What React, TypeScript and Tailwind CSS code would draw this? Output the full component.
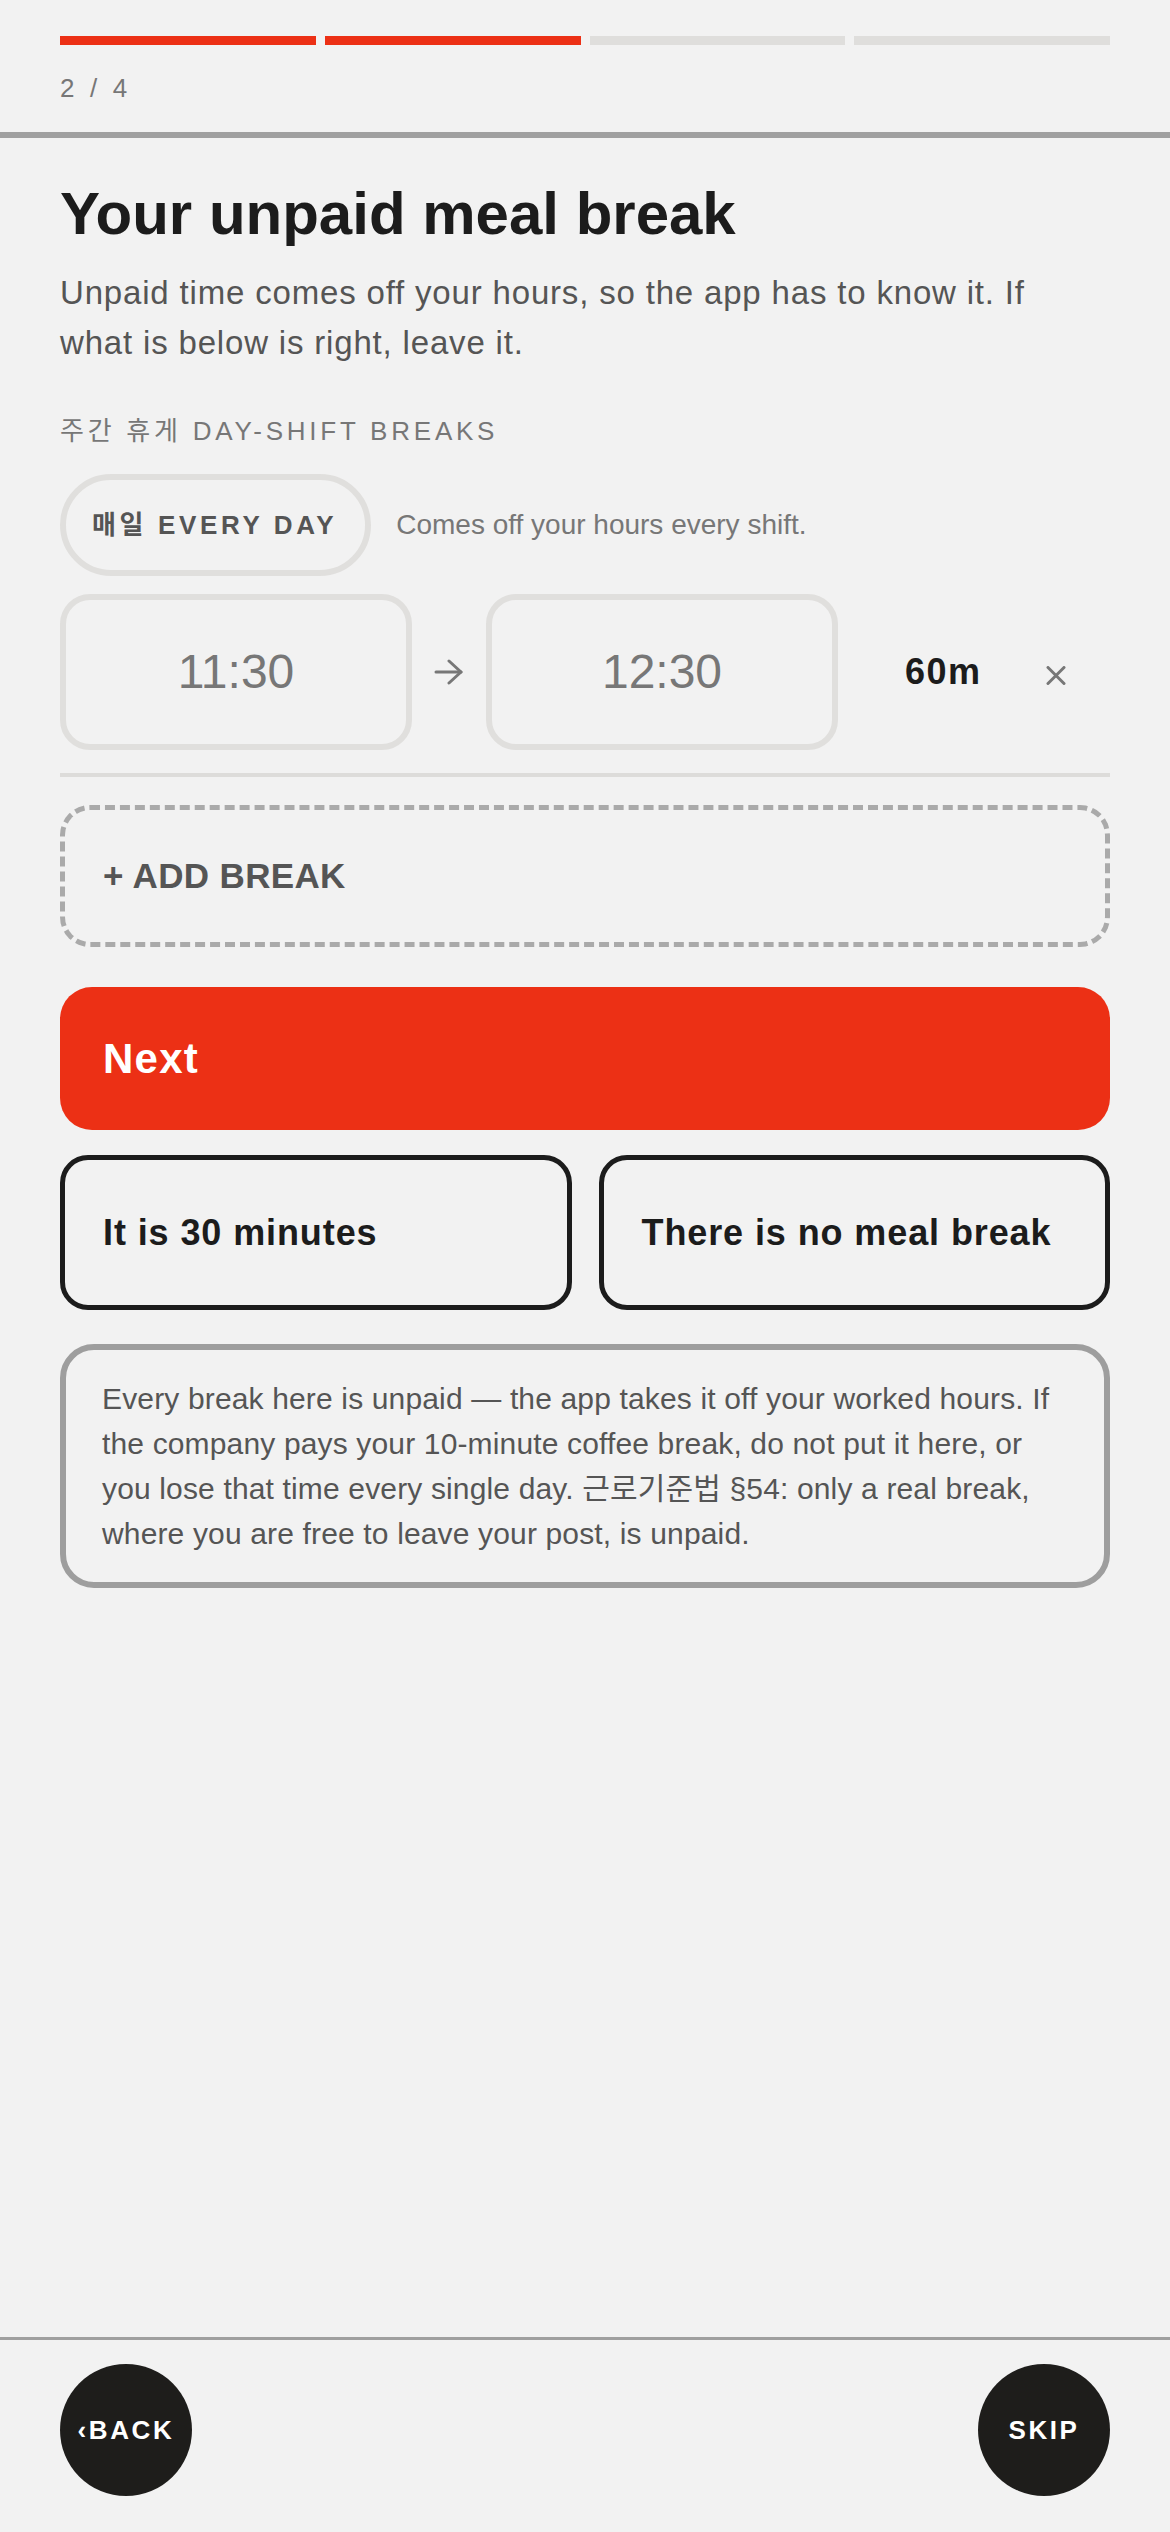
const F = "font-['Liberation_Sans','Noto_Sans_CJK_KR',sans-serif]";

function Arrow() {
  return (
    <svg width="30" height="26" viewBox="0 0 30 26" fill="none" stroke="#777" strokeWidth="3" strokeLinecap="round" strokeLinejoin="round">
      <path d="M2 13 H27" />
      <path d="M15 2 L27 13 L15 24" />
    </svg>
  );
}

function Close() {
  return (
    <svg width="20" height="19" viewBox="0 0 20 19" fill="none" stroke="#777" strokeWidth="3" strokeLinecap="round">
      <path d="M2 1.5 L18 17.5" />
      <path d="M18 1.5 L2 17.5" />
    </svg>
  );
}

export default function App() {
  return (
    <div className={`${F} flex min-h-[2532px] flex-col bg-[#f2f2f2]`}>
      <header className="border-b-[6px] border-[#a0a0a0] px-[60px] pt-[36px] pb-[31px]">
        <div className="flex gap-[9px]">
          <div className="h-[9px] flex-1 bg-[#ec3015]" />
          <div className="h-[9px] flex-1 bg-[#ec3015]" />
          <div className="h-[9px] flex-1 bg-[#dfdedc]" />
          <div className="h-[9px] flex-1 bg-[#dfdedc]" />
        </div>
        <div className="mt-[30px] text-[26px] leading-none tracking-[0.16em] text-[#777]">2 / 4</div>
      </header>

      <main className="flex-1 px-[60px] pt-[46px]">
        <h1 className="text-[60px] font-bold leading-none tracking-[0em] text-[#1c1c1c]">
          Your unpaid meal break
        </h1>
        <p className="mt-[24px] text-[33px] leading-[50px] tracking-[0.025em] text-[#555]">
          Unpaid time comes off your hours, so the app has to know it. If
          <br />
          what is below is right, leave it.
        </p>
        <div className="mt-[50px] text-[26px] leading-none tracking-[0.145em] text-[#777]">
          주간 휴게 DAY-SHIFT BREAKS
        </div>

        <div className="mt-[30px] flex items-center gap-[25px]">
          <div className="flex h-[102px] items-center rounded-full border-[6px] border-[#e0dfdd] pl-[26px] pr-[28px] text-[26px] font-bold tracking-[0.14em] text-[#555]">
            매일 EVERY DAY
          </div>
          <span className="text-[28px] text-[#777]">Comes off your hours every shift.</span>
        </div>

        <div className="mt-[18px] flex items-center">
          <div className="flex h-[156px] w-[352px] items-center justify-center rounded-[30px] border-[6px] border-[#e0dfdd] text-[48px] text-[#777]">
            11:30
          </div>
          <div className="flex w-[74px] justify-center">
            <Arrow />
          </div>
          <div className="flex h-[156px] w-[352px] items-center justify-center rounded-[30px] border-[6px] border-[#e0dfdd] text-[48px] text-[#777]">
            12:30
          </div>
          <span className="ml-[67px] text-[36px] font-bold tracking-[0.04em] text-[#1c1c1c]">60m</span>
          <span className="ml-[65px] mt-[6px] flex">
            <Close />
          </span>
        </div>

        <div className="mt-[23px] h-[4px] bg-[#dddcda]" />

        <div className="mt-[28px] flex h-[142px] items-center rounded-[30px] border-[5px] border-dashed border-[#aaaaaa] px-[38px] text-[35px] font-bold tracking-[0.01em] text-[#555]">
          + ADD BREAK
        </div>

        <button className="mt-[40px] flex h-[143px] w-full items-center rounded-[32px] bg-[#ec3015] px-[43px] text-[42px] font-bold tracking-[0.03em] text-white">
          Next
        </button>

        <div className="mt-[25px] grid grid-cols-2 gap-[27px]">
          <button className="flex h-[155px] items-center rounded-[28px] border-[5px] border-[#1c1c1c] px-[38px] text-left text-[36px] font-bold tracking-[0.025em] text-[#1c1c1c]">
            It is 30 minutes
          </button>
          <button className="flex h-[155px] items-center rounded-[28px] border-[5px] border-[#1c1c1c] px-[38px] text-left text-[36px] font-bold tracking-[0.025em] text-[#1c1c1c]">
            There is no meal break
          </button>
        </div>

        <div className="mt-[34px] rounded-[34px] border-[6px] border-[#9e9e9e] px-[36px] py-[26px] text-[30px] leading-[45px] tracking-[0.005em] text-[#555]">
          Every break here is unpaid — the app takes it off your worked hours. If the company pays your 10-minute coffee break, do not put it here, or you lose that time every single day. 근로기준법 §54: only a real break, where you are free to leave your post, is unpaid.
        </div>
      </main>

      <footer className="flex justify-between border-t-[3px] border-[#a0a0a0] px-[60px] pt-[24px] pb-[36px]">
        <button className="flex h-[132px] w-[132px] items-center justify-center rounded-full bg-[#1e1d1b] text-[26px] font-bold tracking-[0.1em] text-white">
          ‹BACK
        </button>
        <button className="flex h-[132px] w-[132px] items-center justify-center rounded-full bg-[#1e1d1b] text-[26px] font-bold tracking-[0.1em] text-white">
          SKIP
        </button>
      </footer>
    </div>
  );
}
